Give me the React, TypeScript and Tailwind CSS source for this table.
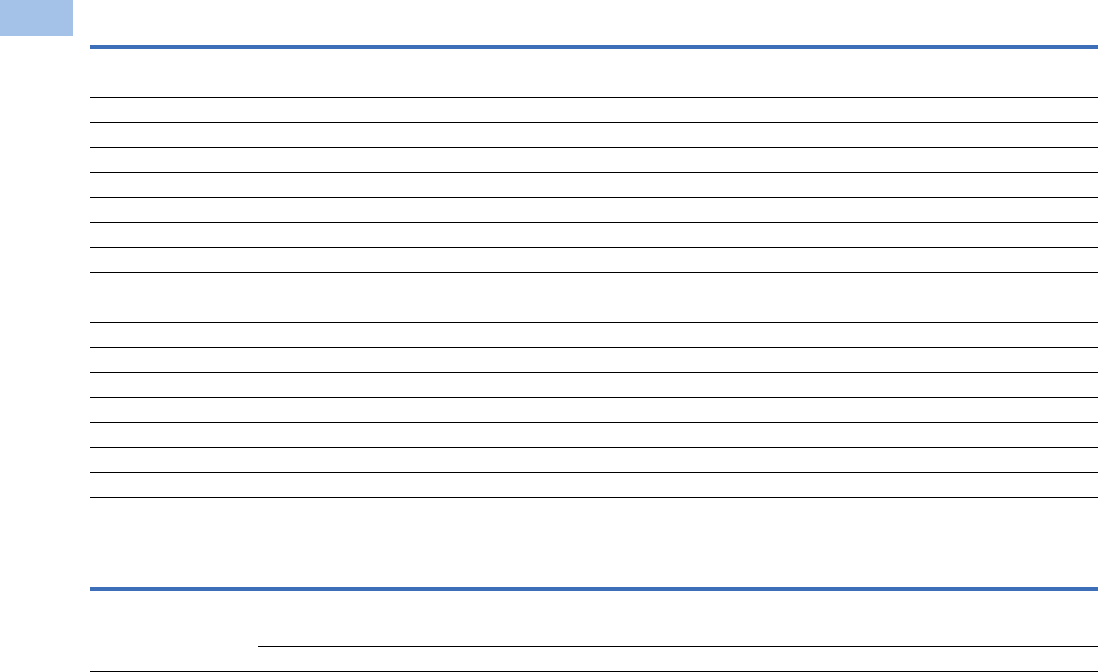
import React from "react";

function Row({ h }: { h: string }) {
  return <div className={`${h} border-b border-black`} />;
}

export default function App() {
  const rowsA = Array.from({ length: 7 });
  const rowsB = Array.from({ length: 7 });
  return (
    <div className="w-[1098px] h-[672px] bg-white overflow-hidden" style={{ fontFamily: '"Liberation Sans", Arial, sans-serif' }}>
      <div className="w-[73px] h-[36px] bg-[#a4c1e8]" />
      <div className="pl-[90px] pt-[9px]">
        <div className="h-[4px] bg-[#3c6fb8]" />
        <div className="h-[49px] border-b border-black" />
        {rowsA.map((_, i) => (
          <div key={`a${i}`} className="h-[25px] border-b border-black" />
        ))}
        <div className="h-[50px] border-b border-black" />
        {rowsB.map((_, i) => (
          <div key={`b${i}`} className="h-[25px] border-b border-black" />
        ))}
        <div className="h-[89px]" />
        <div className="h-[4px] bg-[#3c6fb8]" />
        <div className="flex h-[56px]">
          <div className="w-[168px]" />
          <div className="flex-1 border-b border-black" />
        </div>
        <Row h="h-[25px]" />
      </div>
    </div>
  );
}
